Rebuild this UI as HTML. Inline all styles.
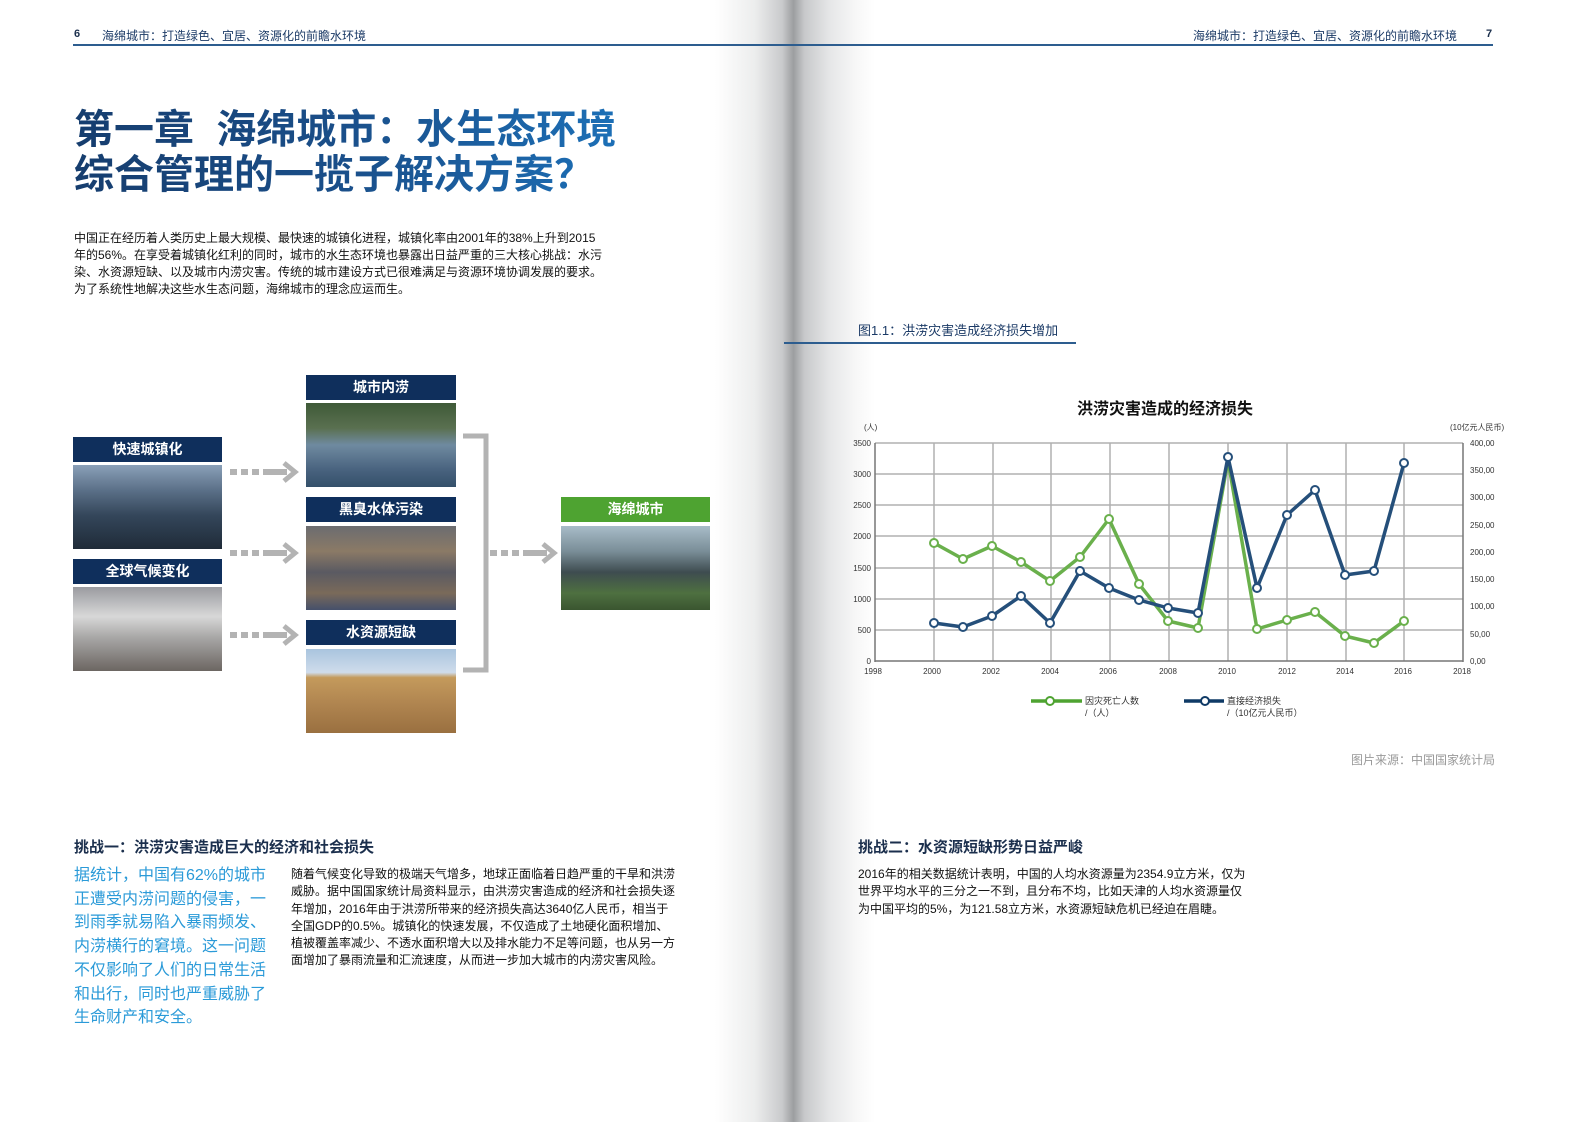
<!DOCTYPE html>
<html><head><meta charset="utf-8">
<style>
body{margin:0;width:1587px;height:1122px;position:relative;overflow:hidden;background:#fff;font-family:"Liberation Sans","Noto Sans CJK SC",sans-serif;color:#222}
.a{position:absolute;white-space:nowrap}
.gut{position:absolute;left:715px;top:0;width:160px;height:1122px;background:linear-gradient(90deg,#fff 0%,#eceded 25%,#c9cacc 42%,#9c9ea0 49%,#c8c9cb 56%,#e6e7e8 72%,#f7f7f7 88%,#fff 100%)}
.title{font-size:40px;font-weight:bold;line-height:45px;background:linear-gradient(90deg,#163d6e 0%,#1a4f8a 50%,#1c6fb6 100%);-webkit-background-clip:text;background-clip:text;color:transparent}
.lab{position:absolute;background:#0f2f5c;color:#fff;font-weight:bold;font-size:14px;text-align:center;line-height:25px;height:25px}
.img{position:absolute}
.p12{font-size:12px;line-height:17px;color:#111}
</style></head><body>
<div class="gut"></div>
<div style="position:absolute;left:73px;top:44px;width:1420px;height:2px;background:#2d5d8f"></div>
<div class="a" style="left:74px;top:28px;font-size:11px;font-weight:bold;color:#1b2f4d">6</div>
<div class="a" style="left:102px;top:27px;font-size:12px;color:#1b3a66">海绵城市：打造绿色、宜居、资源化的前瞻水环境</div>
<div class="a" style="left:1193px;top:27px;font-size:12px;color:#1b3a66">海绵城市：打造绿色、宜居、资源化的前瞻水环境</div>
<div class="a" style="left:1486px;top:28px;font-size:11px;font-weight:bold;color:#1b2f4d">7</div>

<div class="a title" style="left:74px;top:108px">第一章&nbsp;&nbsp;海绵城市：水生态环境<br>综合管理的一揽子解决方案？</div>

<div class="a p12" style="left:74px;top:230px">中国正在经历着人类历史上最大规模、最快速的城镇化进程，城镇化率由2001年的38%上升到2015<br>年的56%。在享受着城镇化红利的同时，城市的水生态环境也暴露出日益严重的三大核心挑战：水污<br>染、水资源短缺、以及城市内涝灾害。传统的城市建设方式已很难满足与资源环境协调发展的要求。<br>为了系统性地解决这些水生态问题，海绵城市的理念应运而生。</div>

<div class="lab" style="left:73px;top:437px;width:149px">快速城镇化</div>
<div class="img" style="left:73px;top:465px;width:149px;height:84px;background:linear-gradient(180deg,#8aa0b8 0%,#5b7088 30%,#34465a 60%,#1f2b38 100%)"></div>
<div class="lab" style="left:73px;top:559px;width:149px">全球气候变化</div>
<div class="img" style="left:73px;top:587px;width:149px;height:84px;background:linear-gradient(180deg,#9a9ba0 0%,#d8d8d8 35%,#a8a7a6 60%,#6c6662 100%)"></div>
<div class="lab" style="left:306px;top:375px;width:150px">城市内涝</div>
<div class="img" style="left:306px;top:403px;width:150px;height:84px;background:linear-gradient(180deg,#3f5a38 0%,#5a7050 30%,#6f8aa0 50%,#48627e 80%,#34506a 100%)"></div>
<div class="lab" style="left:306px;top:497px;width:150px">黑臭水体污染</div>
<div class="img" style="left:306px;top:526px;width:150px;height:84px;background:linear-gradient(180deg,#6b6c70 0%,#8b7a66 30%,#5a5a62 55%,#7a6a5a 80%,#45506a 100%)"></div>
<div class="lab" style="left:306px;top:620px;width:150px">水资源短缺</div>
<div class="img" style="left:306px;top:649px;width:150px;height:84px;background:linear-gradient(180deg,#a9c4de 0%,#cfdceb 28%,#c49a5c 34%,#b08550 65%,#9a7040 100%)"></div>
<div class="lab" style="left:561px;top:497px;width:149px;background:#4ea331">海绵城市</div>
<div class="img" style="left:561px;top:526px;width:149px;height:84px;background:linear-gradient(180deg,#a8bcc8 0%,#7a8e98 30%,#3e4c50 55%,#4e7040 80%,#3a5530 100%)"></div>

<svg class="a" style="left:0;top:0" width="1587" height="1122">
 <g fill="#b3b3b3" stroke="none">
  <g id="dash"><rect x="230" y="469" width="7" height="6"/><rect x="241" y="469" width="7" height="6"/><rect x="252" y="469" width="7" height="6"/><rect x="263" y="469" width="24" height="6"/></g>
  <use href="#dash" y="81"/><use href="#dash" y="163"/>
  <rect x="490" y="550" width="7" height="6"/><rect x="501" y="550" width="7" height="6"/><rect x="512" y="550" width="7" height="6"/><rect x="523" y="550" width="24" height="6"/>
 </g>
 <g fill="none" stroke="#b3b3b3" stroke-width="5">
  <polyline points="284,463 295,472 284,481"/>
  <polyline points="284,544 295,553 284,562"/>
  <polyline points="284,626 295,635 284,644"/>
  <polyline points="543,544 554,553 543,562"/>
  <polyline points="463,436 486,436 486,670 463,670"/>
 </g>
 <g stroke="#b0b0b0" stroke-width="1.5">
  <line x1="875" y1="443" x2="1463" y2="443"/><line x1="875" y1="474" x2="1463" y2="474"/><line x1="875" y1="505" x2="1463" y2="505"/><line x1="875" y1="536" x2="1463" y2="536"/><line x1="875" y1="568" x2="1463" y2="568"/><line x1="875" y1="599" x2="1463" y2="599"/><line x1="875" y1="630" x2="1463" y2="630"/>
  <line x1="934" y1="443" x2="934" y2="661"/><line x1="993" y1="443" x2="993" y2="661"/><line x1="1051" y1="443" x2="1051" y2="661"/><line x1="1110" y1="443" x2="1110" y2="661"/><line x1="1169" y1="443" x2="1169" y2="661"/><line x1="1228" y1="443" x2="1228" y2="661"/><line x1="1287" y1="443" x2="1287" y2="661"/><line x1="1346" y1="443" x2="1346" y2="661"/><line x1="1404" y1="443" x2="1404" y2="661"/>
 </g>
 <g stroke="#777" stroke-width="1.5"><line x1="875" y1="443" x2="875" y2="662"/><line x1="1463" y1="443" x2="1463" y2="662"/><line x1="875" y1="661" x2="1463" y2="661"/></g>
 <g font-size="8" fill="#333" text-anchor="end" font-family="Liberation Sans,sans-serif">
  <text x="871" y="446">3500</text><text x="871" y="477">3000</text><text x="871" y="508">2500</text><text x="871" y="539">2000</text><text x="871" y="571">1500</text><text x="871" y="602">1000</text><text x="871" y="633">500</text><text x="871" y="664">0</text>
 </g>
 <g font-size="8" fill="#333" font-family="Liberation Sans,sans-serif">
  <text x="1470" y="446">400,00</text><text x="1470" y="473">350,00</text><text x="1470" y="500">300,00</text><text x="1470" y="528">250,00</text><text x="1470" y="555">200,00</text><text x="1470" y="582">150,00</text><text x="1470" y="609">100,00</text><text x="1470" y="637">50,00</text><text x="1470" y="664">0,00</text>
 </g>
 <g font-size="8" fill="#333" text-anchor="middle" font-family="Liberation Sans,sans-serif">
  <text x="873" y="674">1998</text><text x="932" y="674">2000</text><text x="991" y="674">2002</text><text x="1050" y="674">2004</text><text x="1108" y="674">2006</text><text x="1168" y="674">2008</text><text x="1227" y="674">2010</text><text x="1287" y="674">2012</text><text x="1345" y="674">2014</text><text x="1403" y="674">2016</text><text x="1462" y="674">2018</text>
 </g>
 <text x="864" y="430" font-size="8" fill="#333" font-family="Liberation Sans,Noto Sans CJK SC,sans-serif">(人)</text>
 <text x="1450" y="430" font-size="8" fill="#333" font-family="Liberation Sans,Noto Sans CJK SC,sans-serif">(10亿元人民币)</text>
 <polyline fill="none" stroke="#6ab04c" stroke-width="3.5" stroke-linejoin="round" points="934,543 963,559 992,546 1021,562 1050,581 1080,557 1109,519 1139,584 1168,621 1198,628 1228,460 1257,629 1287,620 1315,612 1345,636 1374,643 1404,621"/>
 <polyline fill="none" stroke="#254f7a" stroke-width="3.5" stroke-linejoin="round" points="934,623 963,627 992,616 1021,596 1050,623 1080,571 1109,588 1139,600 1168,608 1198,613 1228,457 1257,588 1287,515 1315,490 1345,575 1374,571 1404,463"/>
 <g fill="#fff" stroke="#6ab04c" stroke-width="2">
  <circle cx="934" cy="543" r="4"/><circle cx="963" cy="559" r="4"/><circle cx="992" cy="546" r="4"/><circle cx="1021" cy="562" r="4"/><circle cx="1050" cy="581" r="4"/><circle cx="1080" cy="557" r="4"/><circle cx="1109" cy="519" r="4"/><circle cx="1139" cy="584" r="4"/><circle cx="1168" cy="621" r="4"/><circle cx="1198" cy="628" r="4"/><circle cx="1257" cy="629" r="4"/><circle cx="1287" cy="620" r="4"/><circle cx="1315" cy="612" r="4"/><circle cx="1345" cy="636" r="4"/><circle cx="1374" cy="643" r="4"/><circle cx="1404" cy="621" r="4"/>
 </g>
 <g fill="#fff" stroke="#254f7a" stroke-width="2">
  <circle cx="934" cy="623" r="4"/><circle cx="963" cy="627" r="4"/><circle cx="992" cy="616" r="4"/><circle cx="1021" cy="596" r="4"/><circle cx="1050" cy="623" r="4"/><circle cx="1080" cy="571" r="4"/><circle cx="1109" cy="588" r="4"/><circle cx="1139" cy="600" r="4"/><circle cx="1168" cy="608" r="4"/><circle cx="1198" cy="613" r="4"/><circle cx="1228" cy="457" r="4"/><circle cx="1257" cy="588" r="4"/><circle cx="1287" cy="515" r="4"/><circle cx="1315" cy="490" r="4"/><circle cx="1345" cy="575" r="4"/><circle cx="1374" cy="571" r="4"/><circle cx="1404" cy="463" r="4"/>
 </g>
 <line x1="1031" y1="701" x2="1082" y2="701" stroke="#4ea331" stroke-width="3.5"/><circle cx="1050" cy="701" r="4" fill="#fff" stroke="#4ea331" stroke-width="2"/>
 <line x1="1184" y1="701" x2="1224" y2="701" stroke="#0f3a66" stroke-width="3.5"/><circle cx="1205" cy="701" r="4" fill="#fff" stroke="#0f3a66" stroke-width="2"/>
 <g font-size="9" fill="#333" font-family="Liberation Sans,Noto Sans CJK SC,sans-serif">
  <text x="1085" y="704">因灾死亡人数</text><text x="1085" y="716">/（人）</text>
  <text x="1227" y="704">直接经济损失</text><text x="1227" y="716">/（10亿元人民币）</text>
 </g>
</svg>

<div class="a" style="left:1077px;top:395px;font-size:16px;font-weight:bold;color:#111">洪涝灾害造成的经济损失</div>
<div class="a" style="left:858px;top:320px;font-size:13px;color:#1b3a66">图1.1：洪涝灾害造成经济损失增加</div>
<div style="position:absolute;left:784px;top:342px;width:292px;height:2px;background:#2d5d8f"></div>
<div class="a" style="left:1351px;top:751px;font-size:12px;color:#999">图片来源：中国国家统计局</div>

<div class="a" style="left:74px;top:836px;font-size:15px;font-weight:bold;color:#1b2f4d">挑战一：洪涝灾害造成巨大的经济和社会损失</div>
<div class="a" style="left:74px;top:864px;font-size:16px;line-height:23.7px;color:#2a9ad8">据统计，中国有62%的城市<br>正遭受内涝问题的侵害，一<br>到雨季就易陷入暴雨频发、<br>内涝横行的窘境。这一问题<br>不仅影响了人们的日常生活<br>和出行，同时也严重威胁了<br>生命财产和安全。</div>
<div class="a p12" style="left:291px;top:866px;line-height:17.3px">随着气候变化导致的极端天气增多，地球正面临着日趋严重的干旱和洪涝<br>威胁。据中国国家统计局资料显示，由洪涝灾害造成的经济和社会损失逐<br>年增加，2016年由于洪涝所带来的经济损失高达3640亿人民币，相当于<br>全国GDP的0.5%。城镇化的快速发展，不仅造成了土地硬化面积增加、<br>植被覆盖率减少、不透水面积增大以及排水能力不足等问题，也从另一方<br>面增加了暴雨流量和汇流速度，从而进一步加大城市的内涝灾害风险。</div>

<div class="a" style="left:858px;top:836px;font-size:15px;font-weight:bold;color:#1b2f4d">挑战二：水资源短缺形势日益严峻</div>
<div class="a p12" style="left:858px;top:866px;line-height:17.3px">2016年的相关数据统计表明，中国的人均水资源量为2354.9立方米，仅为<br>世界平均水平的三分之一不到，且分布不均，比如天津的人均水资源量仅<br>为中国平均的5%，为121.58立方米，水资源短缺危机已经迫在眉睫。</div>
</body></html>
